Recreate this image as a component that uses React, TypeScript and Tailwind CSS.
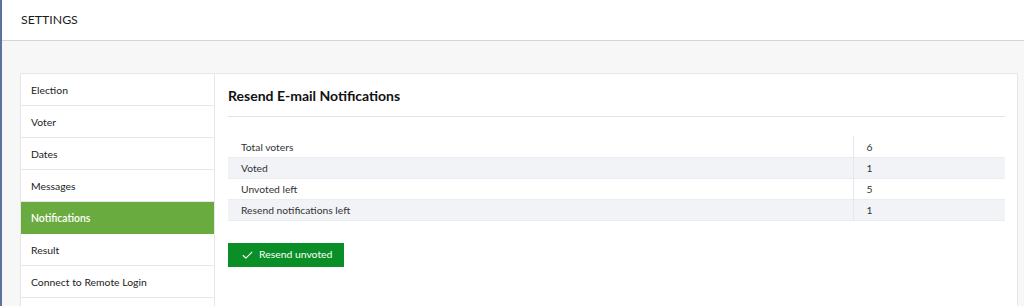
import { Check } from "lucide-react";

const menu = [
  "Election",
  "Voter",
  "Dates",
  "Messages",
  "Notifications",
  "Result",
  "Connect to Remote Login",
  "",
];

const stats: [string, number][] = [
  ["Total voters", 6],
  ["Voted", 1],
  ["Unvoted left", 5],
  ["Resend notifications left", 1],
];

export default function App() {
  const active = "Notifications";

  return (
    <div
      className="flex h-[306px] w-[1024px] overflow-hidden bg-[#f7f7f7] text-[#222]"
      style={{ fontFamily: "Lato, 'Open Sans', sans-serif" }}
    >
      {/* 좌측 얇은 바 */}
      <div className="w-[2px] shrink-0 bg-[#5d7298]" />

      <div className="flex flex-1 flex-col">
        <header className="flex h-[41px] shrink-0 items-center border-b border-[#d6d6d6] bg-white pl-[19px] text-[12.3px] text-[#1c1c1c]">
          SETTINGS
        </header>

        <div className="pl-[18px] pr-[6px] pt-[32px]">
          <div className="flex h-[240px] border border-[#e6e6e6] bg-white">
            {/* 메뉴 */}
            <nav className="flex w-[194px] shrink-0 flex-col border-r border-[#e6e6e6]">
              {menu.map((m, i) => {
                const on = m === active;
                return (
                  <div
                    key={i}
                    className={`flex h-[32px] shrink-0 items-center border-b px-[10px] pt-[2px] text-[10.4px] ${
                      on
                        ? "border-[#6aab3f] bg-[#6aab3f] font-semibold text-white"
                        : "border-[#e8e8e8] text-[#222]"
                    }`}
                  >
                    {m}
                  </div>
                );
              })}
            </nav>

            {/* 본문 */}
            <section className="flex-1 px-[13px] pr-[12px]">
              <h2 className="flex h-[43px] items-end border-b border-[#e3e3e3] pb-[10px] text-[14px] font-bold text-[#111]">
                Resend E-mail Notifications
              </h2>

              <table className="mt-[19px] w-full border-collapse text-[10.3px] text-[#333]">
                <tbody>
                  {stats.map(([label, value], i) => (
                    <tr
                      key={label}
                      className={`h-[21px] border-b border-[#e9ecf1] ${
                        i % 2 === 1 ? "bg-[#f1f3f7]" : ""
                      }`}
                    >
                      <td className="pl-[13px] pt-[2px]">{label}</td>
                      <td className="w-[152px] border-l border-[#e5e7eb] pl-[13px] pt-[2px]">
                        {value}
                      </td>
                    </tr>
                  ))}
                </tbody>
              </table>

              <button className="mt-[22px] flex h-[24px] w-[116px] items-center gap-[5px] bg-[#0a8f26] pl-[13px] pt-px text-[10.4px] text-white">
                <Check size={13} strokeWidth={2} />
                Resend unvoted
              </button>
            </section>
          </div>
        </div>
      </div>
    </div>
  );
}
